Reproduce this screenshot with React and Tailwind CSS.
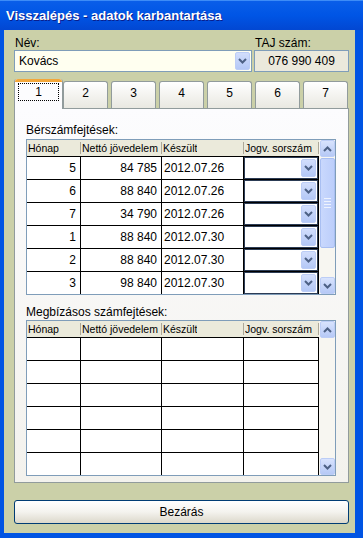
import React from "react";

const Chevron = ({ up = false, className = "" }) => (
  <svg width="9" height="6" viewBox="0 0 9 6" className={className}>
    <path
      d={up ? "M1 5 L4.5 1.5 L8 5" : "M1 1 L4.5 4.5 L8 1"}
      fill="none"
      stroke="#4d6185"
      strokeWidth="2"
    />
  </svg>
);

const DropButton = ({ className = "" }) => (
  <div
    className={`flex items-center justify-center rounded-[2px] border border-[#bccdf6] bg-linear-to-b from-[#d2defc] to-[#b4c8f6] ${className}`}
  >
    <Chevron />
  </div>
);

const ScrollBtn = ({ up }) => (
  <div className="flex h-[17px] w-[15px] shrink-0 items-center justify-center rounded-[2px] border border-[#bccdf6] bg-linear-to-b from-[#d8e3fd] to-[#b6c9f6]">
    <Chevron up={up} />
  </div>
);

const Scrollbar = ({ thumb }) => (
  <div className="flex w-[16px] flex-col items-center bg-[#f7f6f1] pl-px">
    <ScrollBtn up />
    {thumb ? (
      <div className="mt-px flex h-[90px] w-[15px] flex-col items-center justify-center gap-[2px] rounded-[2px] border border-[#a9bff2] bg-linear-to-r from-[#c9d8fd] to-[#bccefb]">
        <div className="h-px w-[7px] bg-[#eef3fe]" />
        <div className="h-px w-[7px] bg-[#eef3fe]" />
        <div className="h-px w-[7px] bg-[#eef3fe]" />
        <div className="h-px w-[7px] bg-[#eef3fe]" />
      </div>
    ) : null}
    <div className="flex-1" />
    <ScrollBtn />
  </div>
);

const HeadCell = ({ w, children }) => (
  <div className={`flex ${w} shrink-0 justify-between pl-px`}>
    <span className="min-w-0 overflow-hidden whitespace-nowrap">{children}</span>
    <span className="my-[2px] w-px shrink-0 bg-[#aca899]" />
  </div>
);

const Header = () => (
  <div className="flex h-[16px] bg-[#ebeadb] text-[10.5px] leading-[16px] text-black">
    <HeadCell w="w-[54px]">Hónap</HeadCell>
    <HeadCell w="w-[81px]">Nettó jövedelem</HeadCell>
    <HeadCell w="w-[82px]">Készült</HeadCell>
    <HeadCell w="w-[75px]">Jogv. sorszám</HeadCell>
  </div>
);

const Row = ({ r }) => (
  <div className="flex h-[23px] border-t border-black bg-white text-[12px] leading-[22px]">
    <div className="w-[54px] border-r border-black pr-[4px] text-right">{r ? r[0] : ""}</div>
    <div className="w-[81px] border-r border-black pr-[4px] text-right">{r ? r[1] : ""}</div>
    <div className="w-[82px] border-r border-black pl-[2px]">{r ? r[2] : ""}</div>
    <div className="w-[75px] border-r border-black">
      {r ? (
        <div className="flex h-full items-center justify-end border border-[#2c3c55] pr-px">
          <DropButton className="h-[18px] w-[15px]" />
        </div>
      ) : null}
    </div>
  </div>
);

const Table = ({ rows, thumb }) => (
  <div className="flex w-[310px] border border-[#7f9db9] bg-white">
    <div className="flex w-[292px] flex-col">
      <Header />
      {rows.map((r, i) => (
        <Row key={i} r={r} />
      ))}
    </div>
    <Scrollbar thumb={thumb} />
  </div>
);

const data = [
  ["5", "84 785", "2012.07.26"],
  ["6", "88 840", "2012.07.26"],
  ["7", "34 790", "2012.07.26"],
  ["1", "88 840", "2012.07.30"],
  ["2", "88 840", "2012.07.30"],
  ["3", "98 840", "2012.07.30"],
];

export default function App() {
  return (
    <div className="flex h-[538px] w-[363px] flex-col overflow-hidden bg-[#0054e3] font-['Liberation_Sans',Arial,sans-serif] text-black">
      <div className="flex h-[30px] shrink-0 items-center border-t border-[#3d8cf7] bg-linear-to-b from-[#0a5ee9] via-[#0055e5] to-[#0247d2] pl-[6px]">
        <span className="text-[13px] font-bold text-white [text-shadow:1px_1px_0_#0a1e8c]">
          Visszalépés - adatok karbantartása
        </span>
      </div>
      <div className="mx-[4px] mb-[5px] mr-[8px] flex flex-1 flex-col bg-[#cbd0a8] pl-[10px] pr-[6px] pt-[6px]">
        <div className="flex h-[14px] text-[12px] leading-[14px]">
          <span className="w-[240px] pl-px">Név:</span>
          <span className="pl-px">TAJ szám:</span>
        </div>
        <div className="flex h-[22px]">
          <div className="flex w-[238px] items-center border border-[#7f9db9] bg-[#fffff0] pr-px">
            <span className="flex-1 pl-[4px] text-[12px]">Kovács</span>
            <DropButton className="h-[18px] w-[15px]" />
          </div>
          <div className="ml-[2px] flex w-[95px] items-center justify-center border border-[#7f9db9] bg-[#ebe9dc] text-[12px]">
            076 990 409
          </div>
        </div>
        <div className="relative z-10 mt-[7px] flex h-[29px] items-end">
          <div className="mb-[-1px] flex h-[30px] w-[49px] flex-col rounded-t-[3px] border-x border-[#919b9c] bg-[#fcfcfe]">
            <div className="h-[3px] rounded-t-[3px] bg-[#f3a73a]" />
            <div className="mx-[3px] mt-[1px] flex h-[18px] items-center justify-center border border-dotted border-black text-[12px]">
              1
            </div>
          </div>
          {["2", "3", "4", "5", "6", "7"].map((t, i) => (
            <div
              key={t}
              className={`${i === 0 ? "ml-0" : "ml-[3px]"} flex h-[27px] w-[45px] items-center justify-center rounded-t-[3px] border-x border-t border-[#919b9c] bg-linear-to-b from-white to-[#e9e8e1] pb-[4px] text-[12px]`}
            >
              {t}
            </div>
          ))}
        </div>
        <div className="flex h-[375px] flex-col border border-[#919b9c] bg-linear-to-b from-[#fcfcfe] to-[#f3f2ed] px-[11px] pt-[13px]">
          <div className="h-[16px] text-[12px] leading-[16px]">Bérszámfejtések:</div>
          <div className="mt-px">
            <Table rows={data} thumb />
          </div>
          <div className="mt-[9px] h-[16px] text-[12px] leading-[16px]">Megbízásos számfejtések:</div>
          <Table rows={[null, null, null, null, null, null]} />
        </div>
        <div className="mt-[17px] flex h-[24px] items-center justify-center rounded-[3px] border border-[#003c74] bg-linear-to-b from-white via-[#f4f3ee] to-[#dcd8cb] text-[12px]">
          Bezárás
        </div>
      </div>
    </div>
  );
}
